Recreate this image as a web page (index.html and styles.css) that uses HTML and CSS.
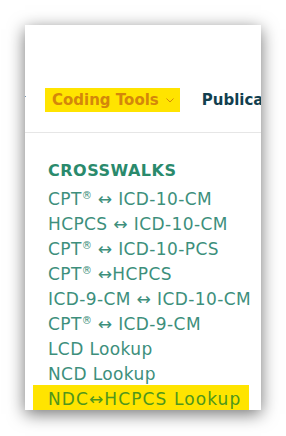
FILE: index.html
```html
<!DOCTYPE html>
<html lang="en">
<head>
<meta charset="utf-8">
<title>Coding Tools menu</title>
<link rel="stylesheet" href="styles.css">
</head>
<body>
<div class="page">
  <div class="card">
    <nav class="nav">
      <span class="nav-stub"></span>
      <a class="nav-item nav-item--active" href="#">Coding Tools
        <svg class="chev" width="8" height="5" viewBox="0 0 8 5"><path d="M0.5 0.5 L4 4 L7.5 0.5" fill="none" stroke="currentColor" stroke-width="1"/></svg>
      </a>
      <a class="nav-item nav-item--dark" href="#">Publications</a>
    </nav>
    <div class="menu">
      <div class="menu-title">CROSSWALKS</div>
      <a class="menu-link" href="#">CPT<sup>®</sup> ↔ ICD-10-CM</a>
      <a class="menu-link" href="#">HCPCS ↔ ICD-10-CM</a>
      <a class="menu-link" href="#">CPT<sup>®</sup> ↔ ICD-10-PCS</a>
      <a class="menu-link" href="#">CPT<sup>®</sup> ↔HCPCS</a>
      <a class="menu-link" href="#">ICD-9-CM ↔ ICD-10-CM</a>
      <a class="menu-link" href="#">CPT<sup>®</sup> ↔ ICD-9-CM</a>
      <a class="menu-link" href="#">LCD Lookup</a>
      <a class="menu-link" href="#">NCD Lookup</a>
      <a class="menu-link menu-link--hl" href="#">NDC↔HCPCS Lookup</a>
    </div>
  </div>
</div>
</body>
</html>
```
FILE: styles.css
```css
html, body {
  margin: 0;
  padding: 0;
  background: #ffffff;
}

.page {
  padding: 25px 25px 26px 25px;
  font-family: "DejaVu Sans", Verdana, sans-serif;
}

.card {
  width: 236px;
  height: 385px;
  background: #ffffff;
  box-shadow: 0 4px 16px rgba(0, 0, 0, 0.55);
  overflow: hidden;
}

.nav {
  display: flex;
  align-items: center;
  height: 108px;
  box-sizing: border-box;
  padding-top: 63px;
  padding-bottom: 21px;
  border-bottom: 1px solid #e6e6e6;
  white-space: nowrap;
}

.nav-stub {
  width: 1px;
  height: 1px;
  background: #7a9ab8;
  margin-top: -6px;
  flex: none;
}

.nav-item {
  display: flex;
  align-items: center;
  flex: none;
  height: 24px;
  font-size: 15px;
  font-weight: bold;
  text-decoration: none;
  letter-spacing: 0;
}

.nav-item--active {
  margin-left: 19px;
  padding: 0 6px 0 7px;
  background: #ffe400;
  color: #d4870a;
}

.chev {
  margin-left: 7px;
  margin-top: 1px;
}

.nav-item--dark {
  margin-left: 22px;
  color: #123f4f;
}

.menu {
  display: flex;
  flex-direction: column;
  padding: 25px 0 0 23px;
}

.menu-title {
  font-size: 16px;
  font-weight: bold;
  line-height: 25px;
  letter-spacing: 0.5px;
  color: #2a8a6c;
  margin-bottom: 4px;
}

.menu-link {
  font-size: 17px;
  line-height: 25px;
  letter-spacing: 0.4px;
  color: #3d8f7c;
  text-decoration: none;
  white-space: nowrap;
}

.menu-link sup {
  font-size: 0.6em;
  line-height: 0;
  vertical-align: 0.6em;
  letter-spacing: 0;
}

.menu-link--hl {
  align-self: flex-start;
  margin-left: -15px;
  margin-top: -2px;
  padding: 2px 8px 0 15px;
  background: #ffe400;
  color: #4f961c;
  letter-spacing: 1.1px;
}
```
